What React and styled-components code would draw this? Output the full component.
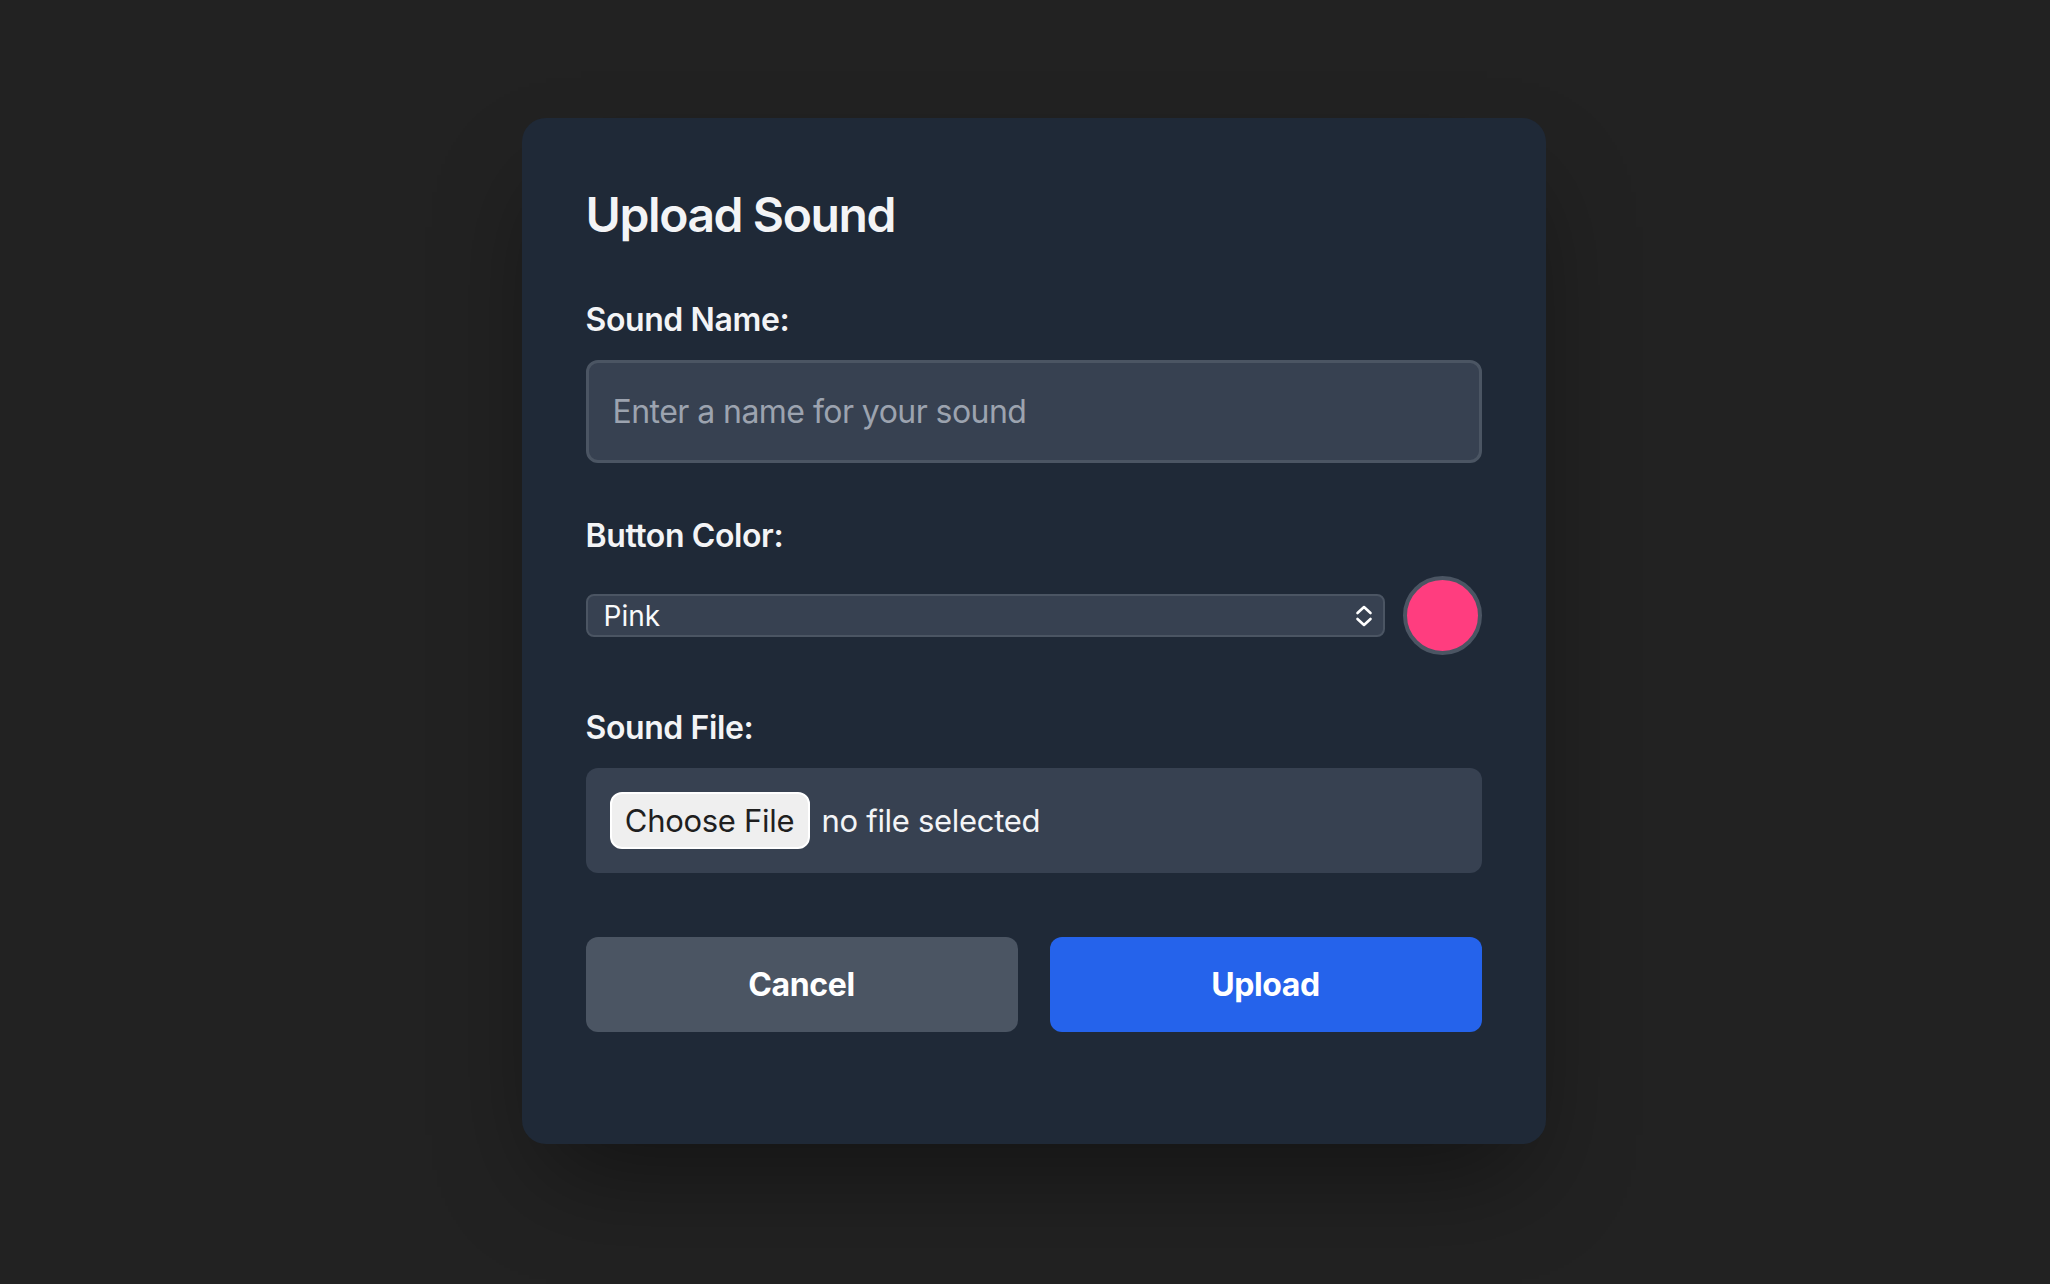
import React from 'react'
import styled, { createGlobalStyle } from 'styled-components'

const GlobalStyle = createGlobalStyle`
  html, body {
    margin: 0;
    padding: 0;
    background: #222222;
    font-family: 'Inter', 'Liberation Sans', sans-serif;
  }
  * {
    box-sizing: border-box;
  }
`

const Page = styled.div`
  min-height: 100vh;
  overflow: hidden;
  display: flex;
  justify-content: center;
  align-items: flex-start;
  padding: 118px 0 0 17px;
`

const Modal = styled.div`
  width: 1024px;
  background: #1f2937;
  border-radius: 24px;
  padding: 64px 64px 64px;
  box-shadow: 0 50px 100px -24px rgba(0, 0, 0, 0.45);
`

const Title = styled.h2`
  margin: 0 0 52px;
  font-size: 48px;
  line-height: 66px;
  font-weight: 600;
  letter-spacing: -1.4px;
  color: #f3f4f6;
`

const Field = styled.div`
  margin-bottom: 53px;
`

const Label = styled.label`
  display: block;
  margin-bottom: 20px;
  font-size: 32px;
  line-height: 40px;
  font-weight: 600;
  letter-spacing: -0.4px;
  color: #f3f4f6;
`

const TextInput = styled.input`
  display: block;
  width: 100%;
  height: 103px;
  padding: 0 24px;
  background: #374151;
  border: 3px solid #4b5563;
  border-radius: 12px;
  font-family: inherit;
  font-size: 32px;
  letter-spacing: -0.55px;
  color: #f3f4f6;
  outline: none;

  &::placeholder {
    color: #9ca3af;
  }
`

const ColorRow = styled.div`
  display: flex;
  align-items: center;
  gap: 18px;
`

const SelectWrap = styled.div`
  position: relative;
  flex: 1;
`

const Select = styled.select`
  display: block;
  width: 100%;
  height: 43px;
  padding: 0 40px 0 16px;
  appearance: none;
  background: #374151;
  border: 2px solid #4b5563;
  border-radius: 8px;
  font-family: inherit;
  font-size: 28px;
  color: #f9fafb;
  outline: none;
`

const Chevrons = styled.svg`
  position: absolute;
  right: 12px;
  top: 50%;
  transform: translateY(-50%);
  pointer-events: none;
`

const Swatch = styled.div`
  width: 79px;
  height: 79px;
  flex-shrink: 0;
  border-radius: 50%;
  background: ${(p) => p.$color};
  border: 4px solid #4b5563;
`

const FileBox = styled.div`
  display: flex;
  align-items: center;
  gap: 12px;
  padding: 24px;
  background: #374151;
  border-radius: 12px;
`

const ChooseButton = styled.button`
  height: 57px;
  width: 200px;
  padding: 0;
  background: #efefef;
  border: 2px solid #ffffff;
  border-radius: 12px;
  font-family: inherit;
  font-size: 31px;
  color: #1f1f1f;
  letter-spacing: -0.3px;
  cursor: pointer;
`

const FileName = styled.span`
  font-size: 31px;
  color: #f3f4f6;
  letter-spacing: -0.3px;
`

const Actions = styled.div`
  display: grid;
  grid-template-columns: 1fr 1fr;
  gap: 32px;
  margin: 64px 0 48px;
`

const ActionButton = styled.button`
  height: 95px;
  border: none;
  border-radius: 12px;
  background: ${(p) => (p.$primary ? '#2563eb' : '#4b5563')};
  color: #ffffff;
  font-family: inherit;
  font-size: 32px;
  font-weight: 700;
  letter-spacing: -0.4px;
  cursor: pointer;
`

function App() {
  return (
    <Page>
      <GlobalStyle />
      <Modal>
        <Title>Upload Sound</Title>

        <Field>
          <Label>Sound Name:</Label>
          <TextInput type="text" placeholder="Enter a name for your sound" />
        </Field>

        <Field>
          <Label>Button Color:</Label>
          <ColorRow>
            <SelectWrap>
              <Select defaultValue="pink">
                <option value="pink">Pink</option>
                <option value="blue">Blue</option>
                <option value="green">Green</option>
              </Select>
              <Chevrons width="18" height="24" viewBox="0 0 18 24" fill="none">
                <path d="M2.5 9 L9 3 L15.5 9" stroke="#fff" strokeWidth="2.6" strokeLinecap="round" strokeLinejoin="round" />
                <path d="M2.5 15 L9 21 L15.5 15" stroke="#fff" strokeWidth="2.6" strokeLinecap="round" strokeLinejoin="round" />
              </Chevrons>
            </SelectWrap>
            <Swatch $color="#ff3d7f" />
          </ColorRow>
        </Field>

        <Label>Sound File:</Label>
        <FileBox>
          <ChooseButton>Choose File</ChooseButton>
          <FileName>no file selected</FileName>
        </FileBox>

        <Actions>
          <ActionButton>Cancel</ActionButton>
          <ActionButton $primary>Upload</ActionButton>
        </Actions>
      </Modal>
    </Page>
  )
}

export default App
